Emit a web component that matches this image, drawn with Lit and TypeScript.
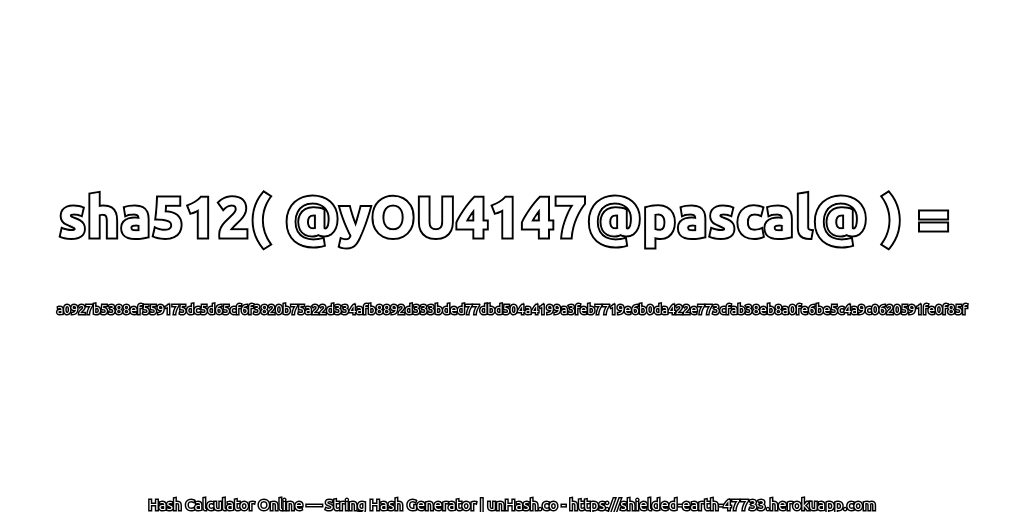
import { LitElement, html, css } from "lit";
import { customElement } from "lit/decorators.js";

@customElement("app-root")
export class AppRoot extends LitElement {
  static styles = css`
    :host { display: block; width: 1024px; height: 512px; background: #fff; font-family: "Ubuntu", "Noto Sans", "Open Sans", sans-serif; }
    .page { display: flex; flex-direction: column; align-items: center; height: 512px; box-sizing: border-box; will-change: transform; }
    .title { display: grid; margin-top: 181px; font-size: 56px; font-weight: 700; letter-spacing: 1.1px; line-height: 72px; white-space: pre; color: #fff; -webkit-text-stroke: 5px #000; }
    .title::after { content: attr(data-text); grid-area: 1 / 1; -webkit-text-stroke: 1px #fff; }
    .title span { grid-area: 1 / 1; }
    .hash { margin-top: 48px; font-size: 13.07px; line-height: 16px; color: #fff; -webkit-text-stroke: 3px #000; paint-order: stroke fill; white-space: nowrap; }
    .foot { margin-top: auto; margin-bottom: -1px; font-size: 15.2px; line-height: 16px; color: #fff; -webkit-text-stroke: 3px #000; paint-order: stroke fill; white-space: nowrap; }
  `;
  render() {
    const title = "sha512( @yOU4147@pascal@ ) = ";
    return html`<div class="page">
      <div class="title" data-text=${title}><span>${title}</span></div>
      <div class="hash">a0927b5388ef559175dc5d65cf6f3820b75a22d334afb8892d333bded77dbd504a4199a3feb7719e6b0da422e773cfab38eb8a0fe6be5c4a9c0620591fe0f85f</div>
      <div class="foot">Hash Calculator Online — String Hash Generator | unHash.co - https://shielded-earth-47733.herokuapp.com</div>
    </div>`;
  }
}
